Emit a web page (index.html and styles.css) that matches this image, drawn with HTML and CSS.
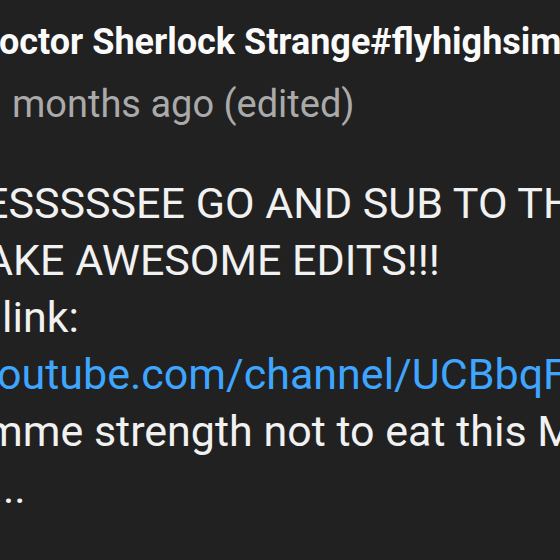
FILE: index.html
```html
<!DOCTYPE html>
<html lang="en">
<head>
<meta charset="utf-8">
<title>Comment</title>
<link rel="stylesheet" href="styles.css">
</head>
<body>
<div class="comment">
  <div class="author"><span class="pre">D</span>octor Sherlock Strange#flyhighsimba</div>
  <div class="meta">months ago (edited)</div>
  <div class="text">
    <div class="line l1"><span class="pre">Y</span>ESSSSSEE GO AND SUB TO THIS CHANNEL</div>
    <div class="line l2"><span class="pre">M</span>AKE AWESOME EDITS!!!</div>
    <div class="line l3"><span class="pre">Channel </span>link:</div>
    <div class="line l4 link"><span class="pre">https://www.y</span>outube.com/channel/UCBbqFx</div>
    <div class="line l5"><span class="pre">Gi</span>mme strength not to eat this MAN</div>
    <div class="line l6"><span class="pre">.</span>..</div>
  </div>
</div>
</body>
</html>
```

FILE: styles.css
```css
html, body {
  margin: 0;
  padding: 0;
  background: #212121;
}
body {
  width: 560px;
  height: 560px;
  overflow: hidden;
  font-family: Roboto, "Noto Sans", "Liberation Sans", sans-serif;
  color: #f1f1f1;
}
.comment {
  padding-top: 20px;
  white-space: nowrap;
}
.pre {
  display: inline-flex;
  width: 0;
  justify-content: flex-end;
  white-space: pre;
}
.author {
  font-size: 36px;
  line-height: 44px;
  font-weight: 700;
  color: #fafafa;
  margin-left: -1px;
}
.meta {
  font-size: 38px;
  line-height: 44px;
  color: #aaaaaa;
  margin-top: 18px;
  padding-left: 12px;
}
.text {
  margin-top: 49px;
  font-size: 43px;
  line-height: 57px;
  color: #f1f1f1;
}
.l1 { margin-left: -16px; }
.l2 { margin-left: -15px; }
.l3 { margin-left: 2px; }
.l4 { margin-left: -3px; }
.l5 { margin-left: -15px; }
.l6 { margin-left: 3px; }
.link { color: #3ea6ff; }
```
